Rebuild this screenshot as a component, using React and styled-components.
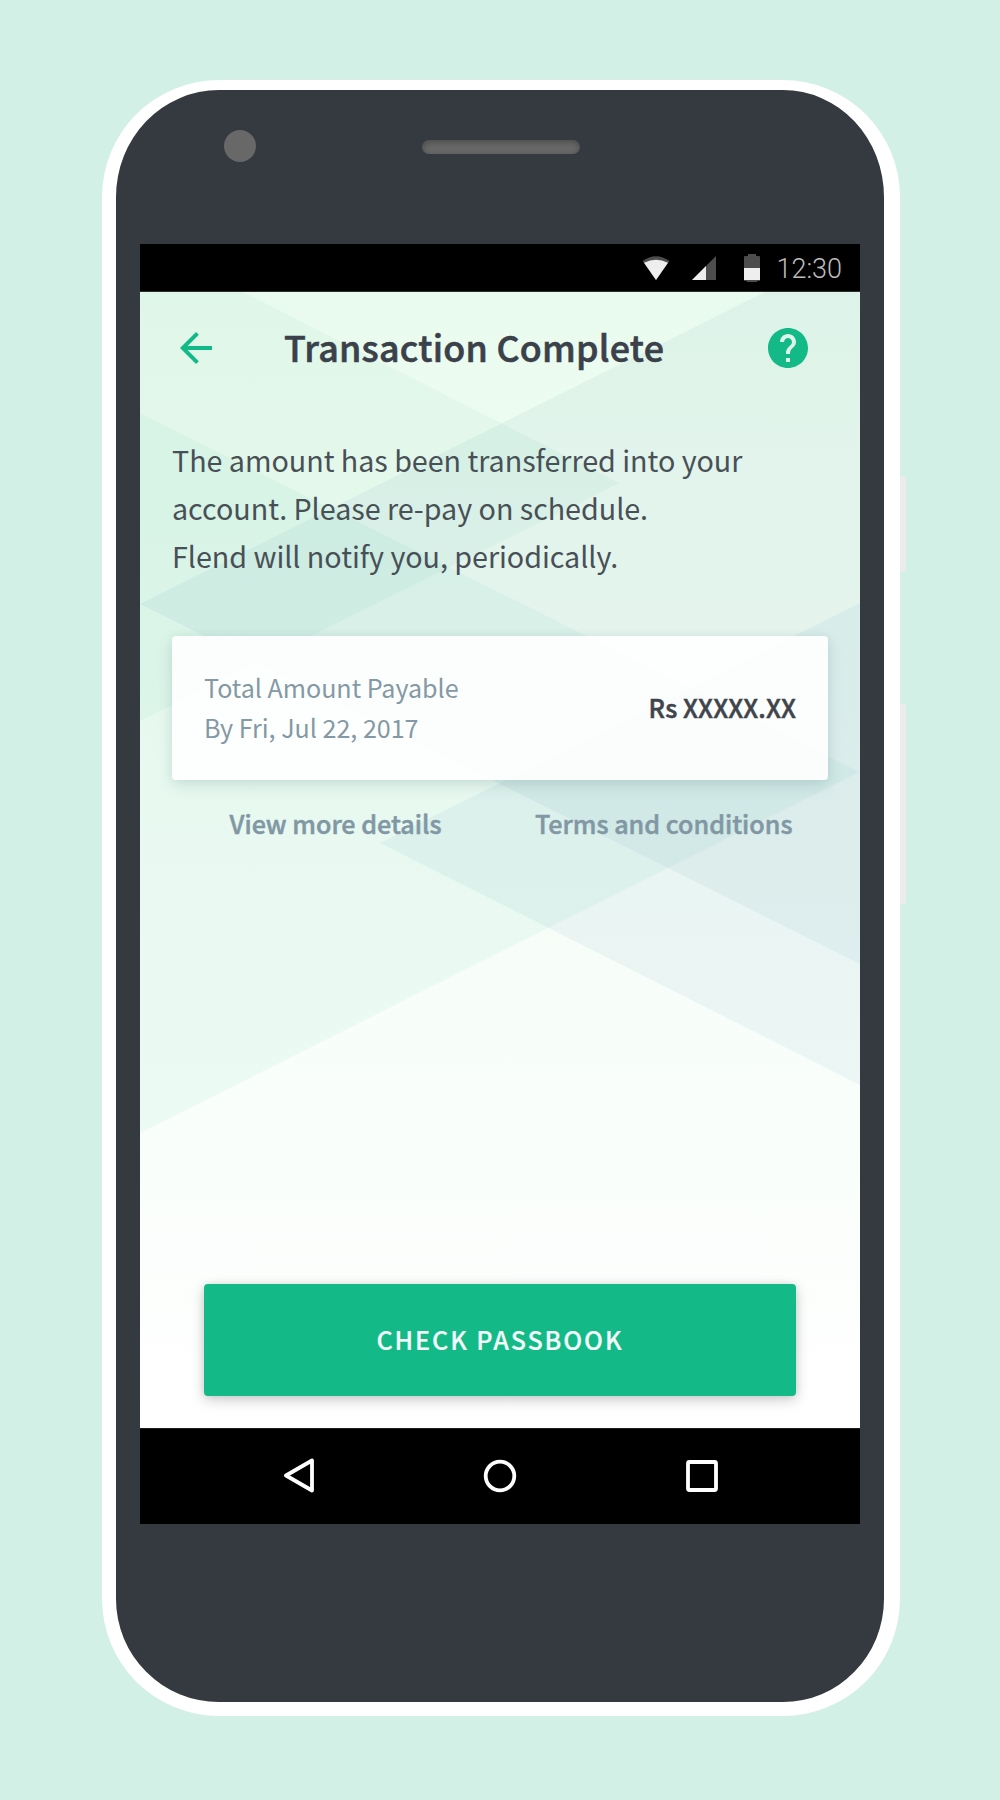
import React from "react";
import styled, { createGlobalStyle } from "styled-components";

const GlobalStyle = createGlobalStyle`
  *, *::before, *::after { box-sizing: border-box; }
  body { margin: 0; background: #d2f0e6; }
`;

const Stage = styled.main`
  display: flex;
  align-items: flex-start;
  width: 1000px;
  height: 1800px;
  padding: 80px 0 0 102px;
  background: #d2f0e6;
  font-family: "Noto Sans CJK SC", "Noto Sans CJK JP", "Noto Sans", sans-serif;
`;

const Phone = styled.div`
  display: flex;
  flex-direction: column;
  width: 798px;
  height: 1636px;
  padding: 0 24px;
  border: solid #fff;
  border-width: 10px 16px 14px 14px;
  border-radius: 117px;
  background: #353a41;
`;

const SideKeys = styled.div`
  display: flex;
  flex-direction: column;
  gap: 132px;
  padding-top: 396px;
`;

const SideKey = styled.div`
  width: 6px;
  height: ${(p) => p.$length}px;
  border-radius: 0 3px 3px 0;
  background: #ececec;
`;

const Forehead = styled.div`
  display: flex;
  align-items: flex-start;
  height: 154px;
  padding: 39.5px 0 0 84px;
`;

const Camera = styled.div`
  width: 32px;
  height: 32px;
  border-radius: 50%;
  background: #686868;
`;

const Speaker = styled.div`
  width: 158px;
  height: 14px;
  margin: 10.5px 0 0 166px;
  border-radius: 7px;
  background: #686868;
  box-shadow: inset 0 2px 6px rgba(0, 0, 0, 0.3);
`;

const Screen = styled.div`
  display: flex;
  flex-direction: column;
  width: 720px;
  height: 1280px;
`;

const StatusBar = styled.div`
  display: flex;
  align-items: center;
  justify-content: flex-end;
  height: 48px;
  padding-right: 18px;
  background: #000;
  box-shadow: inset 0 -1px 0 #2b2e2c;
`;

const StatusIcon = styled.svg`
  display: block;
  width: ${(p) => p.$w}px;
  height: 28px;
  margin-right: ${(p) => p.$gap}px;
`;

const Clock = styled.span`
  padding-top: 1px;
  font: 300 27px/32px Roboto, sans-serif;
  color: #bcbcbc;
`;

const Content = styled.section`
  position: relative;
  isolation: isolate;
  display: flex;
  flex-direction: column;
  height: 1136px;
  background: linear-gradient(180deg, #e9fbee 0%, #eefcf1 14%, #f6fdf7 50%, #f9fefa 72%, #fff 100%);
`;

const Backdrop = styled.svg`
  position: absolute;
  inset: 0;
  z-index: -1;
  width: 720px;
  height: 1136px;
`;

const AppBar = styled.header`
  display: grid;
  grid-template-columns: 48px 1fr 48px;
  align-items: center;
  height: 112px;
  padding: 0 48px 0 32px;
`;

const BarIcon = styled.svg`
  display: block;
  width: 48px;
  height: 48px;
  fill: #14b988;
`;

const Title = styled.h1`
  margin: 0;
  padding: 0 0 4px 64px;
  font-size: 35.8px;
  line-height: 48px;
  font-weight: 500;
  letter-spacing: 0.25px;
  -webkit-text-stroke: 0.6px currentColor;
  white-space: nowrap;
  color: #3a414a;
`;

const Message = styled.p`
  margin: 32px 0 0 32px;
  font-size: 28.7px;
  line-height: 48px;
  letter-spacing: -0.03px;
  white-space: nowrap;
  color: #485056;
`;

const Card = styled.div`
  display: flex;
  align-items: center;
  justify-content: space-between;
  height: 144px;
  margin: 56px 32px 0;
  padding: 0 32px 2px;
  border-radius: 4px;
  background: rgba(255, 255, 255, 0.91);
  box-shadow: 0 6px 16px rgba(40, 80, 90, 0.13), 0 0 10px rgba(40, 80, 90, 0.06);
`;

const Due = styled.div`
  font-size: 25.1px;
  line-height: 40px;
  letter-spacing: -0.02px;
  color: #8499a5;
`;

const Amount = styled.div`
  font-size: 25.1px;
  line-height: 40px;
  font-weight: 500;
  letter-spacing: 0.1px;
  -webkit-text-stroke: 0.5px currentColor;
  color: #3f444b;
`;

const Links = styled.nav`
  display: flex;
  justify-content: space-between;
  padding: 23px 67.5px 0 89.5px;
`;

const Link = styled.a`
  font-size: 25.1px;
  line-height: 40px;
  font-weight: 500;
  -webkit-text-stroke: 0.5px currentColor;
  white-space: nowrap;
  color: #8198a4;
`;

const Action = styled.button`
  height: 112px;
  margin: auto 64px 32px;
  padding: 0 0 2px;
  border: 0;
  border-radius: 4px;
  background: #14b988;
  box-shadow: 0 4px 14px rgba(0, 0, 0, 0.2), 0 0 6px rgba(0, 0, 0, 0.08);
  font-family: inherit;
  font-size: 25.1px;
  line-height: 40px;
  font-weight: 500;
  letter-spacing: 1.92px;
  -webkit-text-stroke: 0.2px currentColor;
  color: #f4fdfa;
`;

const NavBar = styled.div`
  display: flex;
  align-items: center;
  justify-content: space-between;
  height: 96px;
  padding: 0 142px;
  background: #000;
  box-shadow: inset 0 1px 0 #1c1c1c;
`;

const NavIcon = styled.svg`
  display: block;
  width: 34px;
  height: 36px;
  fill: none;
  stroke: #fff;
  stroke-width: 3.8;
  stroke-linejoin: round;
`;

export default function App() {
  return (
    <>
      <GlobalStyle />
      <Stage>
        <Phone>
          <Forehead>
            <Camera />
            <Speaker />
          </Forehead>
          <Screen>
            <StatusBar>
              <StatusIcon $w={28} $gap={22} viewBox="0 0 28 28">
                <path d="M0.5 7 Q14 -2.5 27.5 7 L14 26Z" fill="#4d4d4d" />
                <path d="M2 8.8 Q14 2.5 26 8.8 L14 26Z" fill="#eee" />
              </StatusIcon>
              <StatusIcon $w={24} $gap={28} viewBox="0 0 24 28">
                <path d="M24 2V26H0Z" fill="#4d4d4d" />
                <path d="M14 12V26H0Z" fill="#eee" />
              </StatusIcon>
              <StatusIcon $w={16} $gap={16} viewBox="0 0 16 28">
                <path d="M4 0H12V2H15Q16 2 16 3V26Q16 27 15 27H13V28H3V27H1Q0 27 0 26V3Q0 2 1 2H4Z" fill="#4d4d4d" />
                <path d="M0 14H16V26H0Z" fill="#eee" />
              </StatusIcon>
              <Clock>12:30</Clock>
            </StatusBar>
            <Content>
              <Backdrop viewBox="0 0 720 1136">
                <path d="M0 0H103L479 191L0 429Z" fill="rgba(50,175,145,0.053)" />
                <path d="M625 0H720V672L0 312Z" fill="rgba(40,120,150,0.057)" />
                <path d="M0 121L719 480L0 841Z" fill="rgba(30,180,150,0.06)" />
                <path d="M240 551L720 311V793Z" fill="rgba(50,130,170,0.064)" />
              </Backdrop>
              <AppBar>
                <BarIcon viewBox="0 0 24 24">
                  <path d="M20 11H7.83l5.59-5.59L12 4l-8 8 8 8 1.41-1.41L7.83 13H20v-2z" />
                </BarIcon>
                <Title>Transaction Complete</Title>
                <BarIcon viewBox="0 0 24 24">
                  <path d="M12 2C6.48 2 2 6.48 2 12s4.48 10 10 10 10-4.48 10-10S17.52 2 12 2zm1 17h-2v-2h2v2zm2.07-7.75l-.9.92C13.45 12.9 13 13.5 13 15h-2v-.5c0-1.1.45-2.1 1.17-2.83l1.24-1.26c.37-.36.59-.86.59-1.41 0-1.1-.9-2-2-2s-2 .9-2 2H8c0-2.21 1.79-4 4-4s4 1.79 4 4c0 .88-.36 1.68-.93 2.25z" />
                </BarIcon>
              </AppBar>
              <Message>
                The amount has been transferred into your
                <br />
                account. Please re-pay on schedule.
                <br />
                Flend will notify you, periodically.
              </Message>
              <Card>
                <Due>
                  Total Amount Payable
                  <br />
                  By Fri, Jul 22, 2017
                </Due>
                <Amount>Rs XXXXX.XX</Amount>
              </Card>
              <Links>
                <Link>View more details</Link>
                <Link>Terms and conditions</Link>
              </Links>
              <Action>CHECK PASSBOOK</Action>
            </Content>
            <NavBar>
              <NavIcon viewBox="0 0 34 36">
                <path d="M4 17.5L30 2.5V32.5Z" />
              </NavIcon>
              <NavIcon viewBox="0 0 34 36">
                <circle cx="17" cy="18" r="14.3" />
              </NavIcon>
              <NavIcon viewBox="0 0 34 36">
                <rect x="4" y="4" width="28" height="28" rx="1.5" />
              </NavIcon>
            </NavBar>
          </Screen>
        </Phone>
        <SideKeys>
          <SideKey $length={96} />
          <SideKey $length={200} />
        </SideKeys>
      </Stage>
    </>
  );
}
